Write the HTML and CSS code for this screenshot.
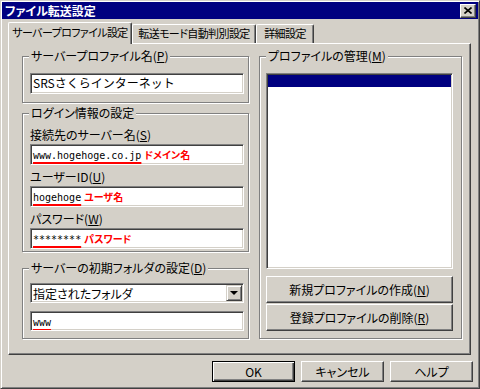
FILE: index.html
```html
<!DOCTYPE html>
<html lang="ja">
<head>
    <meta charset="UTF-8">
    <title>ファイル転送設定</title>
    <link rel="stylesheet" href="styles.css">
</head>
<body>

<div class="window">
    <div class="titlebar">
        <span class="title">ファイル転送設定</span>
        <span class="close">
            <svg width="8" height="7" viewBox="0 0 8 7"><path d="M0.5 0.5L7.5 6.5M7.5 0.5L0.5 6.5" stroke="#000" stroke-width="1.6"/></svg>
        </span>
    </div>

    <div class="tabs">
        <div class="tab active">サーバープロファイル設定</div>
        <div class="tab tab-mode">転送モード自動判別設定</div>
        <div class="tab tab-detail">詳細設定</div>
    </div>

    <div class="panel">
        <div class="col-left">
            <div class="group g-name">
                <span class="group-title">サーバープロファイル名(<u>P</u>)</span>
                <div class="field jp">SRSさくらインターネット</div>
            </div>

            <div class="group g-login">
                <span class="group-title">ログイン情報の設定</span>
                <div class="row">
                    <div class="label">接続先のサーバー名(<u>S</u>)</div>
                    <div class="field"><span class="val ul">www.hogehoge.co.jp</span><span class="note">ドメイン名</span></div>
                </div>
                <div class="row">
                    <div class="label">ユーザーID(<u>U</u>)</div>
                    <div class="field"><span class="val ul">hogehoge</span><span class="note">ユーザ名</span></div>
                </div>
                <div class="row">
                    <div class="label">パスワード(<u>W</u>)</div>
                    <div class="field"><span class="val ul">********</span><span class="note">パスワード</span></div>
                </div>
            </div>

            <div class="group g-folder">
                <span class="group-title">サーバーの初期フォルダの設定(<u>D</u>)</span>
                <div class="select"><span>指定されたフォルダ</span><span class="drop"></span></div>
                <div class="field"><span class="val ul">www</span></div>
            </div>
        </div>

        <div class="group g-profiles">
            <span class="group-title">プロファイルの管理(<u>M</u>)</span>
            <div class="listbox"><div class="selected"></div></div>
            <div class="btn wide">新規プロファイルの作成(<u>N</u>)</div>
            <div class="btn wide">登録プロファイルの削除(<u>R</u>)</div>
        </div>
    </div>

    <div class="footer">
        <div class="btn default">OK</div>
        <div class="btn">キャンセル</div>
        <div class="btn">ヘルプ</div>
    </div>
</div>

</body>
</html>
```

FILE: styles.css
```css
* {
    box-sizing: border-box;
}
body {
    margin: 0;
    font-family: "Noto Sans CJK JP", sans-serif;
    font-size: 12px;
    color: #000;
    font-feature-settings: "palt";
}
u {
    text-decoration-thickness: 1px;
    text-underline-offset: 1px;
}
.window {
    width: 480px;
    height: 389px;
    background-color: #d4d0c8;
    border: 1px solid;
    border-color: #d4d0c8 #404040 #404040 #d4d0c8;
    box-shadow: inset 1px 1px #fff, inset -1px -1px #808080;
    padding: 1px;
    display: flex;
    flex-direction: column;
}
.titlebar {
    height: 17px;
    background-color: #000080;
    color: #fff;
    display: flex;
    align-items: center;
    justify-content: space-between;
    padding: 0 2px 0 3px;
}
.title {
    font-weight: bold;
    line-height: 17px;
}
.close {
    width: 16px;
    height: 14px;
    background-color: #d4d0c8;
    border: 1px solid;
    border-color: #fff #404040 #404040 #fff;
    box-shadow: inset -1px -1px #808080;
    display: flex;
    align-items: center;
    justify-content: center;
}
.tabs {
    display: flex;
    align-items: flex-end;
    height: 21px;
    margin: 3px 0 0 6px;
}
.tab {
    width: 124px;
    height: 19px;
    line-height: 17px;
    font-size: 11px;
    letter-spacing: -0.6px;
    white-space: nowrap;
    text-align: center;
    border: 1px solid;
    border-color: #fff #404040 transparent #fff;
    border-bottom: none;
    border-radius: 2px 2px 0 0;
    box-shadow: inset -1px 0 #808080;
}
.tab.active {
    height: 22px;
    line-height: 19px;
    margin-bottom: -1px;
    position: relative;
    z-index: 1;
    background-color: #d4d0c8;
}
.tab-detail {
    width: 58px;
}
.panel {
    height: 312px;
    margin: 0 7px 0 6px;
    border: 1px solid;
    border-color: #fff #404040 #404040 #fff;
    box-shadow: inset -1px -1px #808080;
    padding: 12px 8px 0 13px;
    display: flex;
    gap: 10px;
    align-items: flex-start;
}
.col-left {
    width: 227px;
}
.group {
    position: relative;
    border: 1px solid #808080;
    box-shadow: inset 1px 1px #fff, 1px 1px #fff;
}
.group-title {
    position: absolute;
    top: -8px;
    left: 6px;
    padding: 0 2px;
    line-height: 14px;
    background-color: #d4d0c8;
    white-space: nowrap;
}
.g-name {
    height: 47px;
    padding: 16px 4px 0 7px;
}
.g-login {
    height: 139px;
    margin-top: 10px;
    padding: 13px 4px 0 7px;
}
.g-folder {
    height: 71px;
    margin-top: 16px;
    padding: 14px 4px 0 7px;
}
.g-profiles {
    width: 203px;
    height: 283px;
    padding: 16px 8px 0 6px;
}
.label {
    height: 16px;
    line-height: 16px;
}
.row .field {
    margin-top: 1px;
}
.row + .row {
    margin-top: 4px;
}
.field, .select, .listbox {
    background-color: #fff;
    border: 1px solid;
    border-color: #808080 #fff #fff #808080;
    box-shadow: inset 1px 1px #404040, inset -1px -1px #d4d0c8;
}
.field {
    height: 21px;
    padding: 0 2px;
    line-height: 18px;
    white-space: nowrap;
    overflow: hidden;
    font-feature-settings: normal;
}
.val {
    font-family: "DejaVu Sans Mono", monospace;
    font-size: 10px;
}
.ul {
    text-decoration: underline 2px #f00;
    text-underline-offset: 3px;
}
.note {
    color: #f00;
    font-weight: bold;
    font-size: 10px;
    margin-left: 3px;
    font-feature-settings: "palt";
}
.g-folder .field {
    height: 20px;
}
.select {
    height: 20px;
    margin-bottom: 8px;
    padding: 1px 1px 1px 2px;
    display: flex;
    align-items: center;
    justify-content: space-between;
}
.drop {
    width: 16px;
    height: 16px;
    background-color: #d4d0c8;
    border: 1px solid;
    border-color: #d4d0c8 #404040 #404040 #d4d0c8;
    box-shadow: inset 1px 1px #fff, inset -1px -1px #808080;
    display: flex;
    align-items: center;
    justify-content: center;
}
.drop::after {
    content: "";
    border-left: 4px solid transparent;
    border-right: 4px solid transparent;
    border-top: 4px solid #000;
}
.listbox {
    height: 196px;
    padding: 1px;
}
.selected {
    height: 12px;
    background-color: #000080;
}
.btn {
    height: 27px;
    display: flex;
    align-items: center;
    justify-content: center;
    background-color: #d4d0c8;
    border: 1px solid;
    border-color: #fff #404040 #404040 #fff;
    box-shadow: inset -1px -1px #808080;
}
.listbox + .btn {
    margin-top: 7px;
}
.btn.wide + .btn.wide {
    margin-top: 1px;
}
.footer {
    display: flex;
    justify-content: flex-end;
    gap: 6px;
    margin-top: 6px;
    padding-right: 5px;
}
.footer .btn {
    width: 83px;
    height: 21px;
}
.btn.default {
    border-color: #000;
    box-shadow: inset 1px 1px #fff, inset -1px -1px #404040, inset -2px -2px #808080;
}
```
